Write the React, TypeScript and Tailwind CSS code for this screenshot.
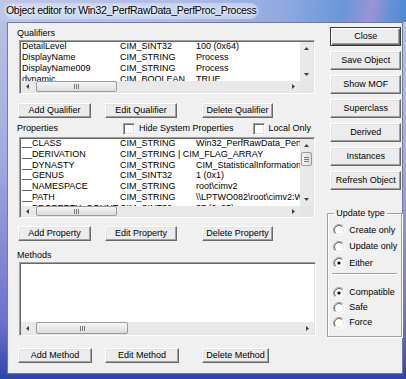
import React from 'react';

type Row = [string, string, string];

const qualifiers: Row[] = [
    ['DetailLevel', 'CIM_SINT32', '100 (0x64)'],
    ['DisplayName', 'CIM_STRING', 'Process'],
    ['DisplayName009', 'CIM_STRING', 'Process'],
    ['dynamic', 'CIM_BOOLEAN', 'TRUE'],
];

const properties: Row[] = [
    ['__CLASS', 'CIM_STRING', 'Win32_PerfRawData_PerfProc_Process'],
    ['__DERIVATION', 'CIM_STRING | CIM_FLAG_ARRAY', ''],
    ['__DYNASTY', 'CIM_STRING', 'CIM_StatisticalInformation'],
    ['__GENUS', 'CIM_SINT32', '1 (0x1)'],
    ['__NAMESPACE', 'CIM_STRING', 'root\\cimv2'],
    ['__PATH', 'CIM_STRING', '\\\\LPTWO082\\root\\cimv2:Win32_PerfRawData_PerfProc_Process'],
    ['__PROPERTY_COUNT', 'CIM_SINT32', '37 (0x25)'],
];

const Arrow = ({ dir }: { dir: 'left' | 'right' | 'up' | 'down' }) => {
    if (dir === 'left' || dir === 'right') {
        return (
            <svg width="3" height="5" viewBox="0 0 3 5">
                <path d={dir === 'left' ? 'M3 0 L0 2.5 L3 5 Z' : 'M0 0 L3 2.5 L0 5 Z'} fill="#404040" />
            </svg>
        );
    }
    return (
        <svg width="5" height="3" viewBox="0 0 5 3">
            <path d={dir === 'up' ? 'M0 3 L2.5 0 L5 3 Z' : 'M0 0 L5 0 L2.5 3 Z'} fill="#404040" />
        </svg>
    );
};

const Grip = ({ vertical = false }: { vertical?: boolean }) =>
    vertical ? (
        <svg width="5" height="5" viewBox="0 0 5 5">
            <path d="M0 0.5 H5 M0 2.5 H5 M0 4.5 H5" stroke="#7a7a7a" strokeWidth="1" />
        </svg>
    ) : (
        <svg width="5" height="5" viewBox="0 0 5 5">
            <path d="M0.5 0 V5 M2.5 0 V5 M4.5 0 V5" stroke="#7a7a7a" strokeWidth="1" />
        </svg>
    );

const HScroll = ({ thumbClass, heightClass }: { thumbClass: string; heightClass: string }) => (
    <div className={`flex flex-1 items-center bg-[#e9e9e9] ${heightClass}`}>
        <div className="flex w-[13px] justify-center">
            <Arrow dir="left" />
        </div>
        <div
            className={`ml-[2px] flex h-full items-center justify-center rounded-[2px] border border-[#9b9b9b] bg-[linear-gradient(#f6f6f6,#dcdcdc)] ${thumbClass}`}
        >
            <Grip />
        </div>
        <div className="flex-1" />
        <div className="flex w-[13px] justify-center">
            <Arrow dir="right" />
        </div>
    </div>
);

const VScroll = ({ thumb = false }: { thumb?: boolean }) => (
    <div className="flex w-[13px] flex-col items-center bg-[#e9e9e9]">
        <div className="flex h-[13px] items-center">
            <Arrow dir="up" />
        </div>
        {thumb && (
            <div className="flex h-[14px] w-[11px] items-center justify-center rounded-[2px] border border-[#9b9b9b] bg-[linear-gradient(90deg,#f6f6f6,#dcdcdc)]">
                <Grip vertical />
            </div>
        )}
        <div className="flex-1" />
        <div className="flex h-[13px] items-center">
            <Arrow dir="down" />
        </div>
    </div>
);

const ListBox = ({
    rows,
    rowClass,
    sizeClass,
    thumbClass,
    scrollHeight = 'h-[11px]',
    vscroll = true,
    vthumb = false,
}: {
    rows: Row[];
    rowClass: string;
    sizeClass: string;
    thumbClass: string;
    scrollHeight?: string;
    vscroll?: boolean;
    vthumb?: boolean;
}) => (
    <div
        className={`ml-[2px] flex flex-col border border-t-[#a0a0a0] border-l-[#a0a0a0] border-r-white border-b-white bg-white shadow-[inset_1px_1px_0_#696969,inset_-1px_-1px_0_#e3e3e3] p-[1px] ${sizeClass}`}
    >
        <div className="flex min-h-0 flex-1">
            <div className="min-w-0 flex-1 overflow-hidden pl-[1px]">
                <div className="-mt-[1px]">
                    {rows.map((r) => (
                        <div key={r[0]} className={`flex whitespace-nowrap text-[9px] text-black ${rowClass}`}>
                            <span className="w-[98px] shrink-0">{r[0]}</span>
                            <span className="w-[76px] shrink-0">{r[1]}</span>
                            <span>{r[2]}</span>
                        </div>
                    ))}
                </div>
            </div>
            {vscroll && <VScroll thumb={vthumb} />}
        </div>
        <div className="flex">
            <HScroll thumbClass={thumbClass} heightClass={scrollHeight} />
            {vscroll && <div className={`w-[13px] bg-[#e6e6e6] ${scrollHeight}`} />}
        </div>
    </div>
);

const Btn = ({ label, className = '', isDefault = false }: { label: string; className?: string; isDefault?: boolean }) => (
    <button
        type="button"
        className={`flex items-center justify-center whitespace-nowrap bg-[#ececec] text-[9px] text-black ${
            isDefault
                ? 'border border-[#3a3a3a] shadow-[inset_1px_1px_0_#ffffff,inset_-1px_-1px_0_#696969,inset_-2px_-2px_0_#a0a0a0]'
                : 'border border-t-white border-l-white border-r-[#696969] border-b-[#696969] shadow-[inset_-1px_-1px_0_#a0a0a0,inset_1px_1px_0_#e3e3e3]'
        } ${className}`}
    >
        {label}
    </button>
);

const Check = ({ label }: { label: string }) => (
    <div className="flex items-center">
        <div className="h-[12px] w-[12px] border border-t-[#a0a0a0] border-l-[#a0a0a0] border-r-white border-b-white bg-white shadow-[inset_1px_1px_0_#696969,inset_-1px_-1px_0_#e3e3e3]" />
        <span className="ml-[4px] text-[9px]">{label}</span>
    </div>
);

const Radio = ({ label, checked = false, rowClass }: { label: string; checked?: boolean; rowClass: string }) => (
    <div className={`flex items-center pl-[5px] ${rowClass}`}>
        <svg width="12" height="12" viewBox="0 0 12 12">
            <circle cx="6" cy="6" r="5.5" fill="#ffffff" />
            <path d="M2.1 9.9 A5.5 5.5 0 0 1 9.9 2.1" stroke="#a0a0a0" fill="none" />
            <path d="M9.9 2.1 A5.5 5.5 0 0 1 2.1 9.9" stroke="#ffffff" fill="none" />
            <path d="M2.8 9.2 A4.5 4.5 0 0 1 9.2 2.8" stroke="#696969" fill="none" />
            <path d="M9.2 2.8 A4.5 4.5 0 0 1 2.8 9.2" stroke="#e3e3e3" fill="none" />
            {checked && <circle cx="6" cy="6" r="1.6" fill="#000000" />}
        </svg>
        <span className="ml-[4px] text-[9px]">{label}</span>
    </div>
);

export default function App() {
    return (
        <div className="flex h-[379px] w-[406px] flex-col overflow-hidden bg-[linear-gradient(180deg,#bcc3e6_0%,#a3acdf_40%,#6c72cc_85%,#2f44a8_100%)] font-['Liberation_Sans',Arial,sans-serif] text-black">
            {/* title bar */}
            <div className="flex h-[22px] items-center bg-[linear-gradient(100deg,#bfc6e8_0%,#b0bae5_45%,#8fa9e0_70%,#6897d8_84%,#9a93d6_91%,#5e93d8_96%,#4f86d2_100%)] pl-[5px]">
                <span className="rounded-[10px] bg-[#d6e2f5]/60 px-[1px] text-[10.5px] tracking-[-0.3px] [text-shadow:0_0_6px_#ffffff,0_0_3px_#ffffff]">
                    Object editor for Win32_PerfRawData_PerfProc_Process
                </span>
            </div>

            {/* client area */}
            <div className="mb-[5px] ml-[7px] mr-[3px] flex flex-1 border border-[#6f7aa8] bg-[#f0f0f0]">
                {/* left column */}
                <div className="flex w-[312px] flex-col pl-[9px]">
                    <div className="mt-[4px] h-[12px] text-[9px] leading-[12px]">Qualifiers</div>
                    <ListBox
                        rows={qualifiers}
                        rowClass="h-[11px] leading-[11px]"
                        sizeClass="mt-[1px] h-[54px] w-[296px]"
                        thumbClass="w-[81px]"
                    />
                    <div className="mt-[9px] flex h-[15px]">
                        <Btn label="Add Qualifier" className="ml-[1px] w-[73px]" />
                        <Btn label="Edit Qualifier" className="ml-[14px] w-[72px]" />
                        <Btn label="Delete Qualifier" className="ml-[25px] w-[71px]" />
                    </div>

                    <div className="mt-[5px] flex h-[12px] items-center">
                        <span className="w-[106px] text-[9px]">Properties</span>
                        <Check label="Hide System Properties" />
                        <div className="ml-[19px]">
                            <Check label="Local Only" />
                        </div>
                    </div>
                    <ListBox
                        rows={properties}
                        rowClass="h-[10.8px] leading-[10.8px]"
                        sizeClass="mt-[2px] h-[81px] w-[296px]"
                        thumbClass="w-[81px]"
                        scrollHeight="h-[10px]"
                        vthumb
                    />
                    <div className="mt-[8px] flex h-[15px]">
                        <Btn label="Add Property" className="ml-[1px] w-[73px]" />
                        <Btn label="Edit Property" className="ml-[14px] w-[72px]" />
                        <Btn label="Delete Property" className="ml-[25px] w-[71px]" />
                    </div>

                    <div className="mt-[8px] h-[12px] text-[9px] leading-[12px]">Methods</div>
                    <ListBox
                        rows={[]}
                        rowClass=""
                        sizeClass="mt-[1px] h-[74px] w-[297px]"
                        thumbClass="w-[92px]"
                        scrollHeight="h-[12px]"
                        vscroll={false}
                    />
                    <div className="mt-[12px] flex h-[15px]">
                        <Btn label="Add Method" className="ml-[1px] w-[74px]" />
                        <Btn label="Edit Method" className="ml-[13px] w-[74px]" />
                        <Btn label="Delete Method" className="ml-[23px] w-[67px]" />
                    </div>
                </div>

                {/* right column */}
                <div className="ml-[8px] flex w-[75px] flex-col">
                    <div className="mt-[4px] flex flex-col gap-[5px] pl-[3px]">
                        <Btn label="Close" className="h-[19px] w-[71px]" isDefault />
                        <Btn label="Save Object" className="h-[19px] w-[71px]" />
                        <Btn label="Show MOF" className="h-[19px] w-[71px]" />
                        <Btn label="Superclass" className="h-[19px] w-[71px]" />
                        <Btn label="Derived" className="h-[19px] w-[71px]" />
                        <Btn label="Instances" className="h-[19px] w-[71px]" />
                        <Btn label="Refresh Object" className="h-[19px] w-[71px]" />
                    </div>

                    <fieldset className="mt-[17px] h-[130px] border border-[#a0a0a0] shadow-[1px_1px_0_#ffffff,inset_1px_1px_0_#ffffff]">
                        <legend className="ml-[6px] px-[2px] text-[9px] leading-[12px]">Update type</legend>
                        <div className="pt-[3px]">
                            <Radio label="Create only" rowClass="h-[16.5px]" />
                            <Radio label="Update only" rowClass="h-[16.5px]" />
                            <Radio label="Either" rowClass="h-[16.5px]" checked />
                        </div>
                        <div className="mx-[4px] mt-[1px] h-[2px] border-t border-t-[#a0a0a0] border-b border-b-white" />
                        <div className="mt-[11px]">
                            <Radio label="Compatible" rowClass="h-[15px]" checked />
                            <Radio label="Safe" rowClass="h-[15px]" />
                            <Radio label="Force" rowClass="h-[15px]" />
                        </div>
                    </fieldset>
                </div>
            </div>
        </div>
    );
}
